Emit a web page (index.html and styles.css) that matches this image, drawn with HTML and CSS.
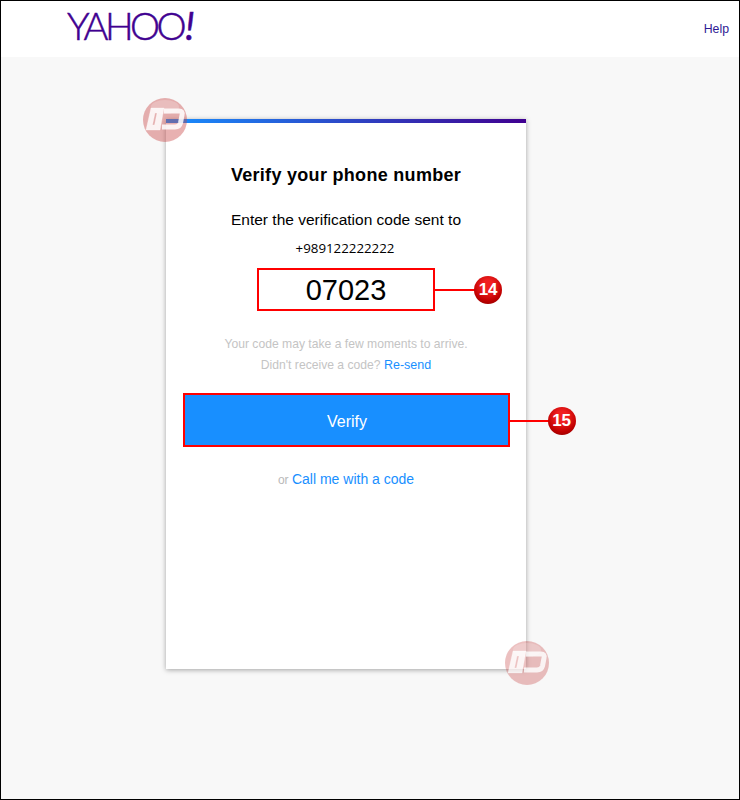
FILE: index.html
```html
<!DOCTYPE html>
<html>
<head>
  <title>Yahoo - Verify your phone number</title>
  <link rel="stylesheet" href="styles.css">
</head>
<body>
  <div class="page">
    <header class="topbar">
      <a class="logo" href="#">YAHOO<span class="bang">!</span></a>
      <a class="help" href="#">Help</a>
    </header>

    <main class="content">
      <section class="card">
        <div class="card-bar"></div>
        <h1 class="title">Verify your phone number</h1>
        <p class="intro">Enter the verification code sent to</p>
        <p class="phone">+989122222222</p>

        <div class="marked code-box">
          07023
          <div class="callout"><span class="callout-line"></span><span class="badge">14</span></div>
        </div>

        <div class="notes">
          <p>Your code may take a few moments to arrive.</p>
          <p>Didn't receive a code? <a href="#">Re-send</a></p>
        </div>

        <div class="marked verify-box">
          <button class="verify" type="button">Verify</button>
          <div class="callout callout-long"><span class="callout-line"></span><span class="badge">15</span></div>
        </div>

        <p class="alt">or <a href="#">Call me with a code</a></p>

        <svg class="stamp stamp-top" viewBox="0 0 44 44">
          <circle class="stamp-disc" cx="22" cy="22" r="22"/>
          <ellipse class="stamp-gloss" cx="22" cy="9" rx="14" ry="7"/>
          <path class="stamp-mark" fill-rule="evenodd" d="M8 10H21L17 32H3ZM12 15L9.5 27H11.5L14 15Z"/>
          <path class="stamp-line" d="M21 13H36Q40 13 39 17L37.5 25Q36.5 29 32 29H19"/>
        </svg>
        <svg class="stamp stamp-bottom" viewBox="0 0 44 44">
          <circle class="stamp-disc" cx="22" cy="22" r="22"/>
          <ellipse class="stamp-gloss" cx="22" cy="9" rx="14" ry="7"/>
          <path class="stamp-mark" fill-rule="evenodd" d="M8 10H21L17 32H3ZM12 15L9.5 27H11.5L14 15Z"/>
          <path class="stamp-line" d="M21 13H36Q40 13 39 17L37.5 25Q36.5 29 32 29H19"/>
        </svg>
      </section>
    </main>
  </div>
</body>
</html>
```

FILE: styles.css
```css
* { box-sizing: border-box; }
body {
  margin: 0;
  font-family: "Liberation Sans", Arial, sans-serif;
  color: #000;
}
p, h1 { margin: 0; }
a { text-decoration: none; color: #188fff; }

.page {
  display: flex;
  flex-direction: column;
  height: 800px;
  border: 1px solid #000;
}

.topbar {
  display: flex;
  justify-content: space-between;
  height: 56px;
  padding: 0 10px 0 66px;
  background: #fff;
}
.logo {
  font-family: "Lato", sans-serif;
  font-weight: 300;
  font-size: 38px;
  line-height: 48px;
  letter-spacing: -3.6px;
  color: #400090;
  -webkit-text-stroke: 0.5px #400090;
}
.bang { margin-left: 2px; font-style: italic; font-weight: 400; }
.help {
  font-size: 12.3px;
  line-height: 56px;
  color: #2e1a94;
}

.content {
  flex: 1;
  padding: 62px 0 0 165px;
  background: #f8f8f8;
}

.card {
  position: relative;
  display: flex;
  flex-direction: column;
  align-items: center;
  width: 360px;
  height: 550px;
  text-align: center;
  background: #fff;
  box-shadow: 0 1px 5px rgba(0,0,0,0.35);
}
.card-bar {
  align-self: stretch;
  height: 4px;
  background: linear-gradient(to right, #188fff, #400090);
}
.title {
  margin-top: 40px;
  font-size: 18px;
  line-height: 24px;
  font-weight: bold;
  letter-spacing: 0.3px;
}
.intro {
  margin-top: 21px;
  font-size: 15.5px;
  line-height: 24px;
}
.phone {
  margin-top: 6px;
  padding-right: 2px;
  font-family: "Open Sans", sans-serif;
  font-size: 13.3px;
  line-height: 20px;
}

.marked {
  position: relative;
  border: 2px solid #f00;
}
.code-box {
  width: 178px;
  height: 43px;
  margin-top: 10px;
  font-size: 29px;
  line-height: 41px;
}
.callout {
  position: absolute;
  left: 100%;
  top: 50%;
  display: flex;
  align-items: center;
  line-height: 28px;
  transform: translate(2px, -50%);
}
.callout-long { margin-top: 1px; }
.callout-line {
  width: 40px;
  height: 2px;
  background: #f00;
}
.callout-long .callout-line { width: 39px; }
.badge {
  width: 28px;
  height: 28px;
  margin-left: -1px;
  border-radius: 50%;
  font-size: 17px;
  font-weight: bold;
  line-height: 27px;
  letter-spacing: -0.3px;
  color: #fff;
  background: radial-gradient(circle at 50% 35%, #f02020 25%, #c00000 65%, #7d0000 100%);
}

.notes {
  margin-top: 22px;
  font-size: 12.15px;
  line-height: 22px;
  color: #c4c4c4;
}
.notes p + p { margin-top: -1px; }
.notes a { font-size: 12.5px; }

.verify-box {
  width: 327px;
  height: 54px;
  margin-top: 17px;
}
.verify {
  display: block;
  width: 100%;
  height: 100%;
  border: 0;
  padding: 4px 0 0 2px;
  font-family: inherit;
  font-size: 16px;
  color: #fff;
  background: #188fff;
}

.alt {
  margin-top: 22px;
  font-size: 12px;
  line-height: 20px;
  color: #b9b9b9;
}
.alt a { font-size: 14px; }

.stamp {
  position: absolute;
  width: 44px;
  height: 44px;
}
.stamp-top { left: -23px; top: -21px; }
.stamp-bottom { right: -23px; bottom: -16px; opacity: 0.8; }
.stamp-disc { fill: #c84646; fill-opacity: 0.42; }
.stamp-gloss { fill: #fff; fill-opacity: 0.2; }
.stamp-mark { fill: #fff; fill-opacity: 0.85; stroke: #fff; stroke-opacity: 0.3; stroke-linejoin: round; }
.stamp-line {
  fill: none;
  stroke: #fff;
  stroke-opacity: 0.85;
  stroke-width: 5;
}
```
